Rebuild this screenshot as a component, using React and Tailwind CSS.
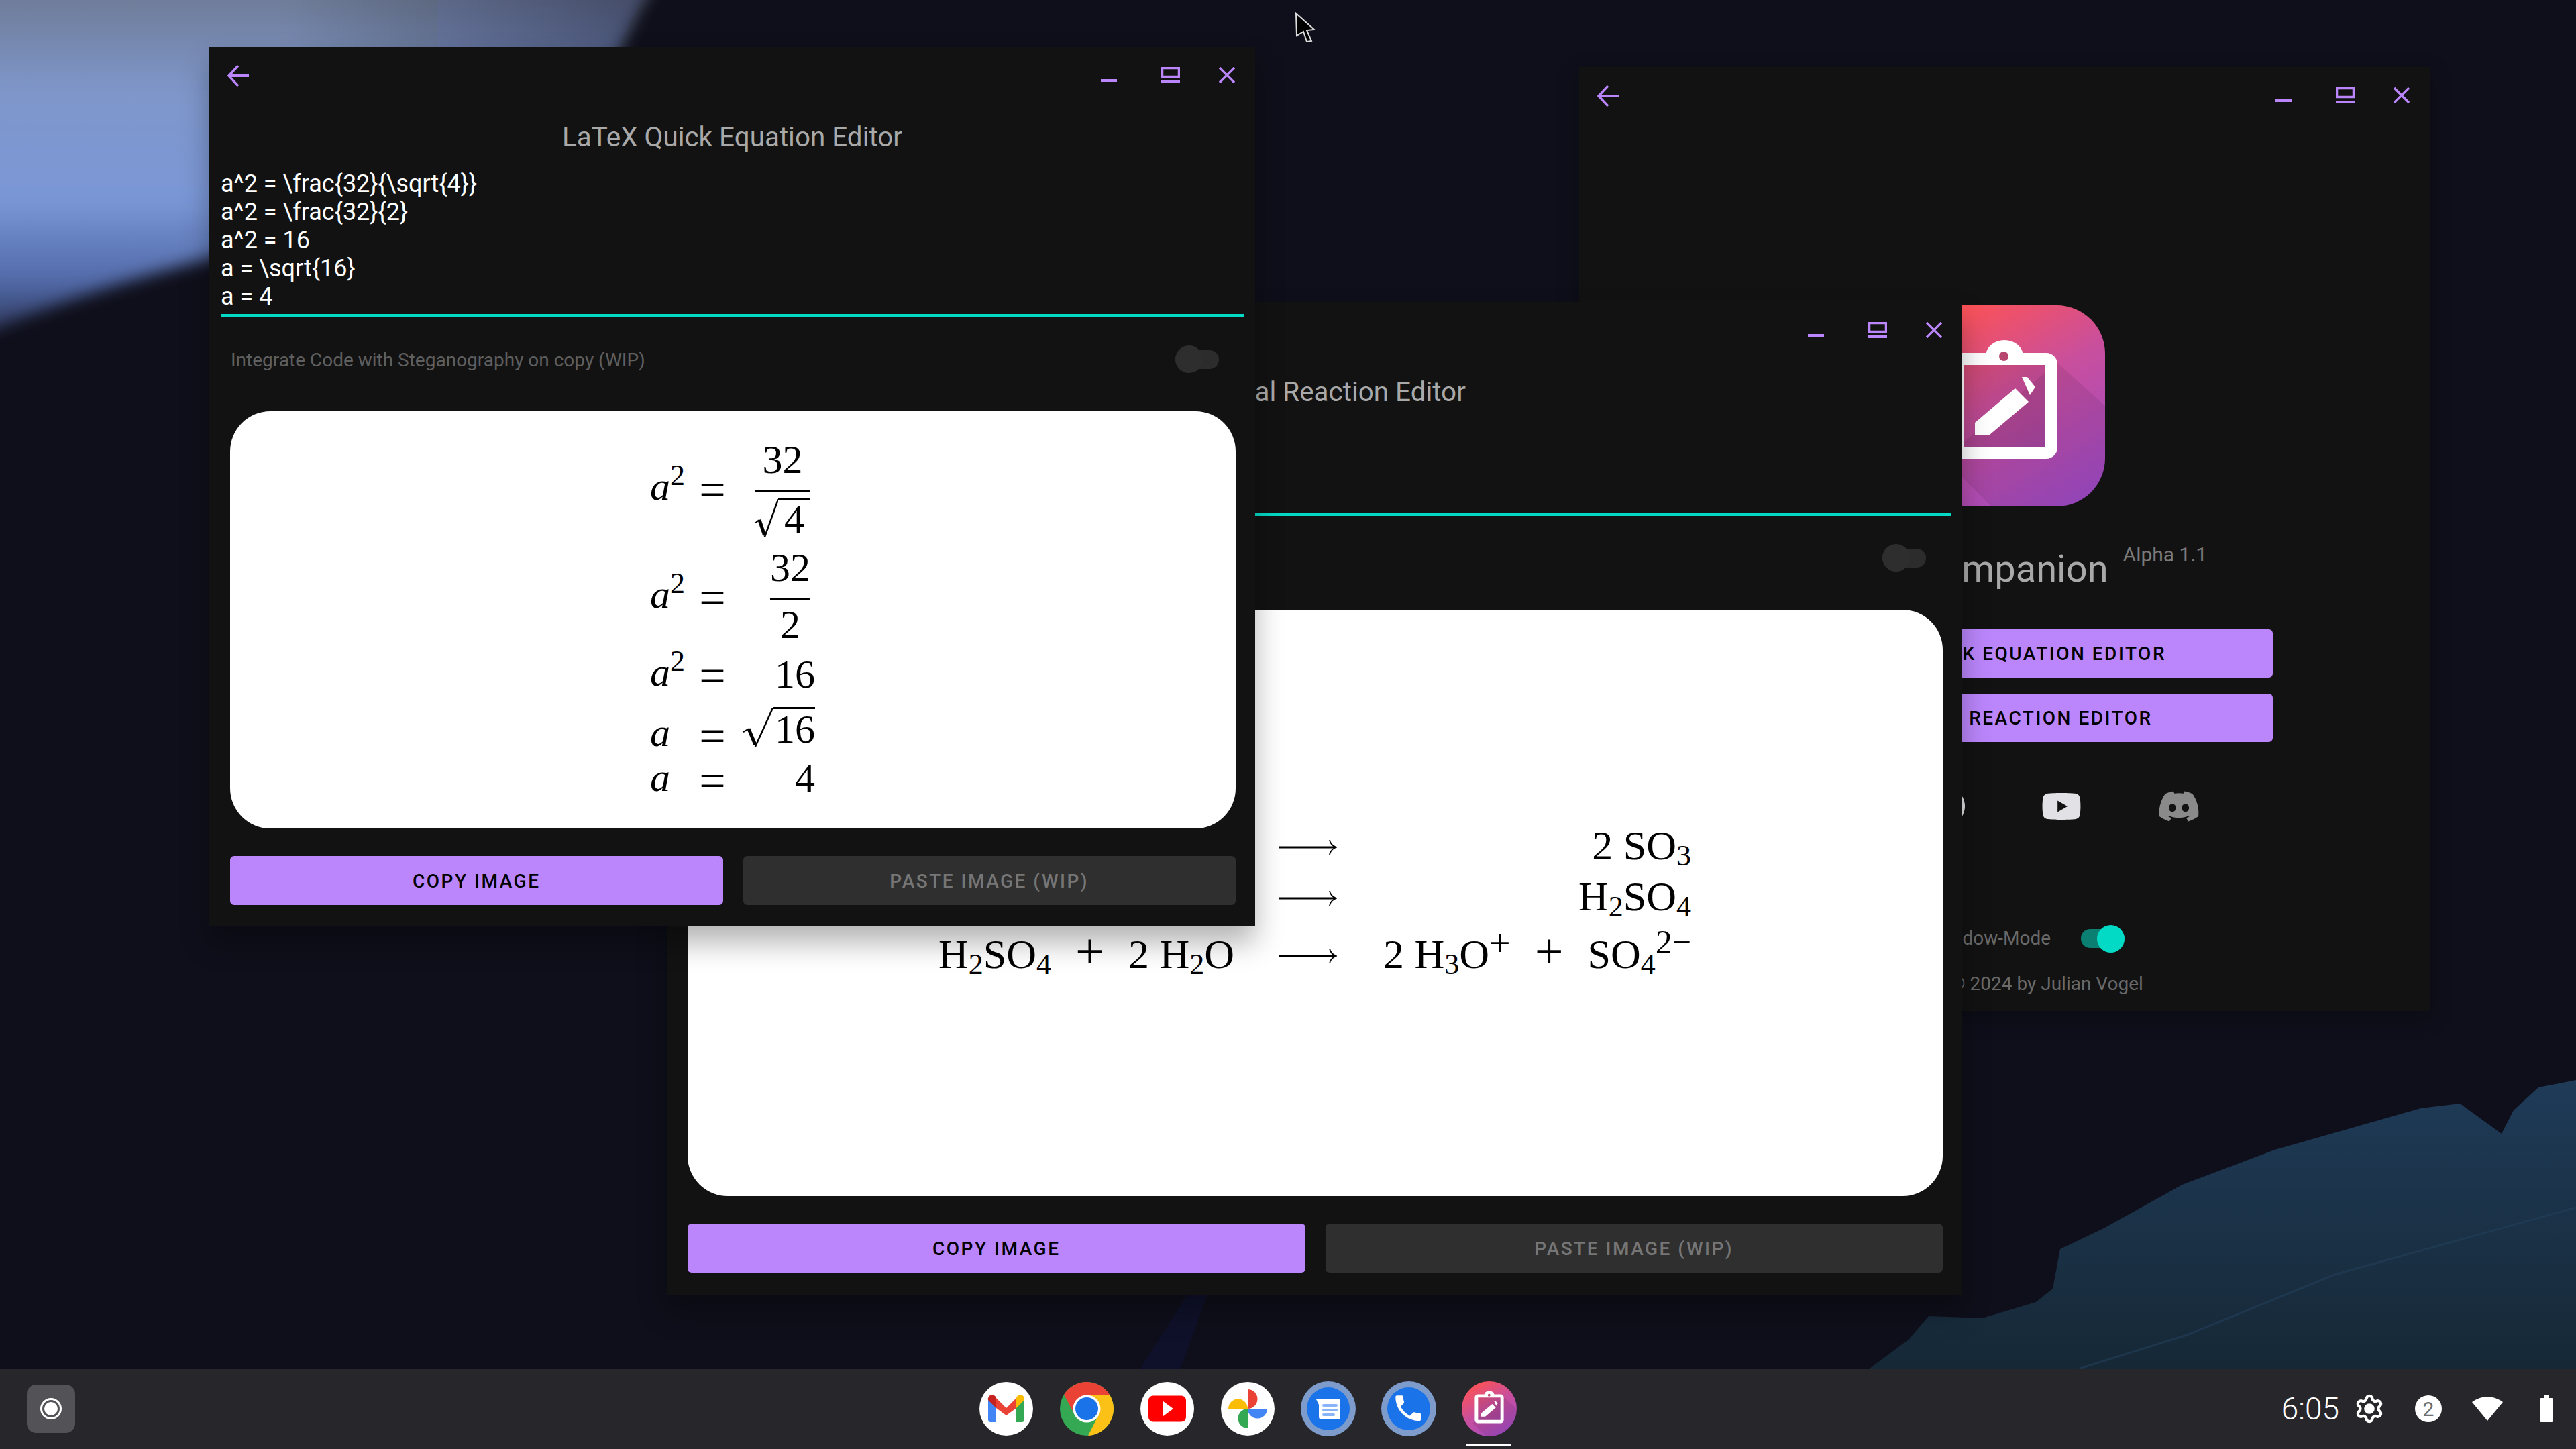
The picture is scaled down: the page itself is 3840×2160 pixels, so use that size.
import React from 'react';
import { FaDiscord, FaGithub, FaGlobe, FaYoutube } from 'react-icons/fa6';
import { Settings } from 'lucide-react';

const roboto = { fontFamily: 'Roboto, sans-serif' };

const BackIcon = () => (
    <svg width="34" height="32" viewBox="0 0 34 32" fill="none" stroke="#bb86fc" strokeWidth="3.5">
        <path d="M33 16H3" strokeWidth="4" />
        <path d="M17 1L3 16l14 15" />
    </svg>
);

const WindowControls = () => (
    <div className="flex items-start gap-[58px] pt-[3px]">
        <svg width="24" height="24" viewBox="0 0 24 24" className="mr-[8px]"><rect x="0" y="18" width="24" height="4" fill="#bb86fc" /></svg>
        <svg width="28" height="24" viewBox="0 0 28 24" fill="none">
            <rect x="1.5" y="1.5" width="25" height="13" stroke="#bb86fc" strokeWidth="3.5" />
            <rect x="0" y="20" width="28" height="4" fill="#bb86fc" />
        </svg>
        <svg width="24" height="24" viewBox="0 0 24 24" fill="none" stroke="#bb86fc" strokeWidth="3.5"><path d="M1 1l22 22M23 1L1 23" /></svg>
    </div>
);

const TitleBar = () => (
    <div className="flex justify-between pt-[27px] pl-[26px] pr-[30px] h-[59px]">
        <BackIcon />
        <WindowControls />
    </div>
);

const Toggle = ({ on }) => (
    <div className="relative flex items-center w-[65px] h-[41px]">
        <div className={`w-full h-[28px] rounded-full ${on ? 'bg-[#0b7f72]' : 'bg-[#2c2c2c]'}`} />
        <div className={`absolute top-0 w-[41px] h-[41px] rounded-full ${on ? 'right-0 bg-[#03dac5]' : 'left-0 bg-[#2e2e2e]'}`} />
    </div>
);

const Sup = ({ children }) => <span className="text-[44px] leading-[0] align-[22px]">{children}</span>;
const Sub = ({ children }) => <span className="text-[44px] leading-[0] align-[-9px]">{children}</span>;
const Plus = () => <span className="text-[76px] leading-[0] mx-[36px]">+</span>;

const Radical = ({ w, h }) => (
    <svg width={w} height={h} viewBox={`0 0 ${w} ${h}`} fill="none" stroke="#000" className="shrink-0">
        <path d={`M1 ${h * 0.62}L${w * 0.2} ${h * 0.54}`} strokeWidth="2" />
        <path d={`M${w * 0.2} ${h * 0.54}L${w * 0.42} ${h - 4}`} strokeWidth="5" />
        <path d={`M${w * 0.42} ${h - 1}L${w} 1.5`} strokeWidth="2.5" />
    </svg>
);

const M = ({ children, className = '' }) => (
    <div className={`h-[60px] leading-[60px] text-[60px] whitespace-nowrap ${className}`}>{children}</div>
);

const Frac = ({ num, den, numPad, denPad }) => (
    <div className="flex flex-col items-center mr-[7px]">
        <div className="flex flex-col justify-end h-[90px]" style={{ paddingBottom: numPad }}>{num}</div>
        <div className="w-full h-[3px] bg-black" />
        <div className="h-[90px]" style={{ paddingTop: denPad }}>{den}</div>
    </div>
);

const EqRow = ({ lhs, rhs, className = '' }) => (
    <div className={`flex items-center h-0 ${className}`}>
        <div className="w-[73px] mb-[12px]">{lhs}</div>
        <M className="w-[40px] text-center text-[70px]">=</M>
        <div className="flex justify-end items-center w-[133px]">{rhs}</div>
    </div>
);

const A2 = () => <M><i>a</i><Sup>2</Sup></M>;
const A = () => <M><i>a</i></M>;

const EquationCard = () => (
    <div className="h-[622px] rounded-[60px] bg-white text-black pt-[118px] pl-[626px]" style={{ fontFamily: '"Liberation Serif", serif' }}>
        <EqRow
            lhs={<A2 />}
            rhs={
                <Frac
                    num={<M className="text-center">32</M>}
                    numPad="15px"
                    denPad="10px"
                    den={
                        <div className="flex">
                            <Radical w={35} h={59} />
                            <div className="border-t-[3px] border-black w-[48px] text-center leading-[56px] text-[60px]">4</div>
                        </div>
                    }
                />
            }
        />
        <EqRow
            className="mt-[161px]"
            lhs={<A2 />}
            rhs={<Frac num={<M>32</M>} numPad="15px" denPad="7px" den={<M className="text-center">2</M>} />}
        />
        <EqRow className="mt-[116px]" lhs={<A2 />} rhs={<M className="mb-[6px]">16</M>} />
        <EqRow
            className="mt-[90px]"
            lhs={<A />}
            rhs={
                <div className="flex mb-[28px]">
                    <Radical w={45} h={60} />
                    <div className="border-t-[3px] border-black w-[63px] pl-[3px] h-[60px] leading-[60px] text-[60px]">16</div>
                </div>
            }
        />
        <EqRow className="mt-[67px]" lhs={<A />} rhs={<M className="mb-[10px]">4</M>} />
    </div>
);

const Arrow = () => (
    <svg width="87" height="24" viewBox="0 0 87 24" fill="none" stroke="#000" className="shrink-0">
        <path d="M0 12H84" strokeWidth="3" />
        <path d="M76 1c1 5 4 9 10 11-6 2-9 6-10 11" strokeWidth="1.8" />
    </svg>
);

const ReactionRow = ({ lhs, rhs, className = '' }) => (
    <div className={`flex items-center h-0 ${className}`}>
        <M className="w-[815px] text-right text-[62px] mb-[6px]">{lhs}</M>
        <div className="ml-[66px]"><Arrow /></div>
        <M className="w-[528px] text-right text-[62px] mb-[6px]">{rhs}</M>
    </div>
);

const ReactionCard = () => (
    <div className="h-[874px] rounded-[60px] bg-white text-black pt-[354px]" style={{ fontFamily: '"Liberation Serif", serif' }}>
        <ReactionRow lhs={<>2 SO<Sub>2</Sub><Plus />O<Sub>2</Sub></>} rhs={<>2 SO<Sub>3</Sub></>} />
        <ReactionRow className="mt-[76px]" lhs={<>SO<Sub>3</Sub><Plus />H<Sub>2</Sub>O</>} rhs={<>H<Sub>2</Sub>SO<Sub>4</Sub></>} />
        <ReactionRow
            className="mt-[86px]"
            lhs={<>H<Sub>2</Sub>SO<Sub>4</Sub><Plus />2 H<Sub>2</Sub>O</>}
            rhs={<>2 H<Sub>3</Sub>O<span className="text-[56px] leading-[0] align-[18px]">+</span><Plus />SO<Sub>4</Sub><span className="text-[50px] leading-[0] align-[22px]">2−</span></>}
        />
    </div>
);

const EditorWindow = ({ className, title, lines, card, label }) => (
    <div className={`absolute bg-[#121212] shadow-[0_24px_40px_rgba(0,0,0,0.3)] ${className}`} style={roboto}>
        <TitleBar />
        <div className="mt-[52px] h-[48px] text-center text-[40.4px] leading-[48px] text-[#a9a9a9]">{title}</div>
        <div className="mt-[24px] pl-[17px] text-[36px] leading-[42px] text-white">
            {lines.map((line) => <div key={line} className="h-[42px]">{line}</div>)}
        </div>
        <div className="mt-[5px] ml-[17px] mr-[16px] h-[5px] bg-[#03dac5]" />
        <div className="flex items-center justify-between h-[41px] mt-[42px] pl-[32px] pr-[54px]">
            <span className="h-[41px] text-[28px] leading-[44px] text-[#5f5f5f]">{label}</span>
            <Toggle />
        </div>
        <div className="mt-[57px] pl-[31px] pr-[29px]">{card}</div>
        <div className="flex gap-[30px] mt-[41px] pl-[31px] pr-[29px]">
            <button className="flex-1 h-[73px] pt-[2px] rounded-[6px] bg-[#bb86fc] text-[28px] font-medium tracking-[2.5px] text-black">COPY IMAGE</button>
            <button className="flex-1 h-[73px] pt-[2px] rounded-[6px] bg-[#2f2f2f] text-[28px] font-medium tracking-[2.5px] text-[#767676]">PASTE IMAGE (WIP)</button>
        </div>
    </div>
);

const AppIcon = ({ className }) => (
    <svg viewBox="0 0 300 300" className={className}>
        <defs>
            <linearGradient id="appGrad" x1="0.25" y1="0" x2="0.85" y2="1">
                <stop offset="0" stopColor="#ff5252" />
                <stop offset="0.45" stopColor="#c94f9c" />
                <stop offset="1" stopColor="#9f4ac8" />
            </linearGradient>
        </defs>
        <rect width="300" height="300" rx="72" fill="url(#appGrad)" />
        <path d="M228 85L300 150V228a72 72 0 0 1-72 72H130L60 229z" fill="#000" opacity="0.08" />
        <rect x="80" y="80" width="140" height="140" rx="8" fill="#000" opacity="0.08" />
        <rect x="80" y="80" width="140" height="140" rx="8" fill="none" stroke="#fff" strokeWidth="18" />
        <path d="M122 76a28 24 0 0 1 56 0z" fill="#fff" />
        <circle cx="149" cy="76" r="7" fill="#b8476f" />
        <path d="M106 175L166 124l20 20-58 49h-22zM176 107h8l12 15-8 12z" fill="#fff" />
    </svg>
);

const MenuButton = ({ children }) => (
    <button className="w-[800px] h-[72px] pt-[2px] rounded-[6px] bg-[#bb86fc] text-[28px] font-medium tracking-[2.5px] text-black">{children}</button>
);

const HomeWindow = () => (
    <div className="absolute left-[2354px] top-[100px] w-[1268px] h-[1407px] bg-[#121212] shadow-[0_10px_30px_rgba(0,0,0,0.25)]" style={roboto}>
        <TitleBar />
        <div className="flex flex-col items-center">
            <AppIcon className="mt-[296px] w-[300px] h-[300px]" />
            <div className="flex items-start mt-[57px] h-[70px] gap-[22px]">
                <span className="text-[56px] leading-[72px] text-[#a9a9a9]">LaTeX Companion</span>
                <span className="text-[30px] leading-[30px] text-[#7a7a7a]">Alpha 1.1</span>
            </div>
            <div className="flex flex-col gap-[24px] mt-[56px]">
                <MenuButton>LATEX QUICK EQUATION EDITOR</MenuButton>
                <MenuButton>CHEMICAL REACTION EDITOR</MenuButton>
            </div>
            <div className="flex items-center justify-center gap-[113px] mt-[72px] h-[48px]">
                <FaGlobe size={60} color="#e2e2e6" />
                <FaGithub size={60} color="#e2e2e6" />
                <FaYoutube size={60} color="#e2e2e6" />
                <FaDiscord size={64} color="#8a8a8a" />
            </div>
            <div className="flex items-center gap-[45px] mt-[152px] ml-[15px]">
                <span className="text-[28px] text-[#6a6a6a]">Use Window-Mode</span>
                <Toggle on />
            </div>
            <div className="mt-[30px] h-[34px] text-[28px] leading-[34px] text-[#6a6a6a]">Copyright © 2024 by Julian Vogel</div>
        </div>
    </div>
);

const Wallpaper = () => (
    <svg className="absolute inset-0" width="3840" height="2040" viewBox="0 0 3840 2040">
        <defs>
            <linearGradient id="sky" x1="0" y1="0" x2="0" y2="1">
                <stop offset="0" stopColor="#6c778f" />
                <stop offset="0.32" stopColor="#7f97cb" />
                <stop offset="0.62" stopColor="#7a97d6" />
                <stop offset="0.85" stopColor="#5169a8" />
                <stop offset="1" stopColor="#2a3150" />
            </linearGradient>
            <linearGradient id="skyFade" x1="0" y1="0" x2="1" y2="0">
                <stop offset="0.45" stopColor="#0f0f1b" stopOpacity="0" />
                <stop offset="1" stopColor="#0f0f1b" stopOpacity="0.4" />
            </linearGradient>
            <linearGradient id="sea" x1="0" y1="0" x2="0" y2="1">
                <stop offset="0" stopColor="#1f3b58" />
                <stop offset="1" stopColor="#162836" />
            </linearGradient>
            <filter id="soft"><feGaussianBlur stdDeviation="12" /></filter>
        </defs>
        <rect width="3840" height="2040" fill="#0f0f1b" />
        <path d="M-30-30H975C945 20 920 70 890 140L600 300 312 385C200 415 80 450-30 500Z" fill="url(#sky)" filter="url(#soft)" />
        <path d="M-30-30H975C945 20 920 70 890 140L600 300 312 385C200 415 80 450-30 500Z" fill="url(#skyFade)" filter="url(#soft)" />
        <path d="M2787 2040L2845 1997 2875 1962 2955 1965 3035 1941 3060 1921 3071 1862 3136 1831 3253 1766 3391 1714 3609 1652 3667 1645 3729 1690 3747 1655 3784 1621 3840 1610V2040Z" fill="url(#sea)" />
        <path d="M3100 2040L3260 1990 3480 1900 3840 1800" fill="none" stroke="#23405a" strokeWidth="3" opacity="0.6" />
        <path d="M1700 2040L1770 1930 1800 1930 1760 2040Z" fill="#0f1330" opacity="0.7" />
    </svg>
);

const Cursor = () => (
    <svg className="absolute left-[1925px] top-[12px]" width="44" height="60" viewBox="25 12 44 60">
        <path d="M32 20L33 53 43 47 48 62 55 61 48 45 59 44Z" fill="#000" stroke="#ddd" strokeWidth="2" />
    </svg>
);

const Circle = ({ children, ring }) => (
    <svg width="82" height="82" viewBox="-1 -1 82 82">
        <circle cx="40" cy="40" r={ring ? 41 : 40} fill={ring ? '#7d9ccb' : '#fff'} />
        {ring && <circle cx="40" cy="40" r="32" fill="#1a73e8" />}
        {children}
    </svg>
);

const Gmail = () => (
    <Circle>
        <path d="M13 27a6 6 0 0 1 9-5l3 2v36H17a4 4 0 0 1-4-4z" fill="#4285f4" />
        <path d="M67 27a6 6 0 0 0-9-5l-3 2v36h8a4 4 0 0 0 4-4z" fill="#34a853" />
        <path d="M25 24L40 39 55 24V39L40 50 25 39z" fill="#ea4335" />
        <path d="M13 27a6 6 0 0 1 12-3V39z" fill="#c5221f" />
        <path d="M67 27a6 6 0 0 0-12-3V39z" fill="#fbbc04" />
    </Circle>
);

const Chrome = () => (
    <svg width="82" height="82" viewBox="-1 -1 82 82">
        <circle cx="40" cy="40" r="40" fill="#34a853" />
        <path d="M40 20H74.64A40 40 0 0 1 42 80L57.3 50Z" fill="#fbc116" />
        <path d="M74.64 20A40 40 0 0 0 6 19L22.7 50 40 20Z" fill="#ea4335" />
        <circle cx="40" cy="40" r="20.5" fill="#fff" />
        <circle cx="40" cy="40" r="17" fill="#1a73e8" />
    </svg>
);

const Youtube = () => (
    <Circle>
        <rect x="12" y="20.5" width="56" height="39" rx="7" fill="#f00" />
        <path d="M34 29L49 40 34 51z" fill="#fff" />
    </Circle>
);

const Photos = () => (
    <Circle>
        <path d="M40 40H11A14.5 14.5 0 0 1 40 40Z" fill="#fbbc04" />
        <path d="M40 40V11A14.5 14.5 0 0 1 40 40Z" fill="#ea4335" />
        <path d="M40 40H69A14.5 14.5 0 0 1 40 40Z" fill="#4285f4" />
        <path d="M40 40V69A14.5 14.5 0 0 1 40 40Z" fill="#34a853" />
    </Circle>
);

const Messages = () => (
    <Circle ring>
        <path d="M22 26H58V52a4 4 0 0 1-4 4H30a4 4 0 0 1-4-4V34z" fill="#fff" />
        <rect x="31" y="33" width="23" height="4" rx="2" fill="#8ab4f8" />
        <rect x="31" y="40" width="23" height="4" rx="2" fill="#8ab4f8" />
        <rect x="31" y="47" width="19" height="4" rx="2" fill="#8ab4f8" />
    </Circle>
);

const PhoneApp = () => (
    <Circle ring>
        <g transform="translate(14 14) scale(2.1)">
            <path d="M6.62 10.79c1.44 2.83 3.76 5.14 6.59 6.59l2.2-2.2c.27-.27.67-.36 1.02-.24 1.12.37 2.33.57 3.57.57.55 0 1 .45 1 1V20c0 .55-.45 1-1 1-9.39 0-17-7.61-17-17 0-.55.45-1 1-1h3.5c.55 0 1 .45 1 1 0 1.25.2 2.45.57 3.57.11.35.03.74-.25 1.02l-2.2 2.2z" fill="#fff" />
        </g>
    </Circle>
);

const Shelf = () => (
    <div className="flex items-center h-[120px] bg-[#26262b]" style={roboto}>
        <div className="flex items-center justify-center ml-[40px] w-[72px] h-[72px] rounded-[14px] bg-[#535357]">
            <div className="flex items-center justify-center w-[32px] h-[32px] rounded-full border-[3px] border-white">
                <div className="w-[20px] h-[20px] rounded-full bg-white" />
            </div>
        </div>
        <div className="flex items-center ml-[1347px] gap-[38px]">
            <Gmail />
            <Chrome />
            <Youtube />
            <Photos />
            <Messages />
            <PhoneApp />
            <div className="relative">
                <AppIcon className="w-[82px] h-[82px] rounded-full" />
                <div className="absolute left-[7px] top-[93px] w-[67px] h-[4px] bg-white" />
            </div>
        </div>
        <div className="flex items-center ml-auto pr-[34px] text-white">
            <span className="text-[46px] font-light leading-none">6:05</span>
            <div className="relative flex items-center justify-center ml-[22px]">
                <Settings size={46} strokeWidth={2.2} />
                <div className="absolute w-[14px] h-[14px] rounded-full bg-white" />
            </div>
            <div className="flex items-center justify-center ml-[45px] w-[40px] h-[40px] rounded-full bg-white text-[30px] text-[#6f6f6f]">2</div>
            <svg width="46" height="36" viewBox="0 0 46 36" className="ml-[45px]"><path d="M0 8Q23-8 46 8L23 36Z" fill="#fff" /></svg>
            <svg width="20" height="40" viewBox="0 0 20 40" className="ml-[55px]"><path d="M6 0h8v4h4a2 2 0 0 1 2 2v32a2 2 0 0 1-2 2H2a2 2 0 0 1-2-2V6a2 2 0 0 1 2-2h4z" fill="#fff" /></svg>
        </div>
    </div>
);

export default function App() {
    return (
        <div className="flex flex-col w-[3840px] h-[2160px] overflow-hidden bg-[#0f0f1b]">
            <div className="relative flex-1">
                <Wallpaper />
                <HomeWindow />
                <EditorWindow
                    className="left-[994px] top-[450px] w-[1931px] h-[1480px]"
                    title="Chemical Reaction Editor"
                    label="Integrate Code with Steganography on copy (WIP)"
                    lines={['2 SO_2 + O_2 -> 2 SO_3', 'SO_3 + H_2O -> H_2SO_4', 'H_2SO_4 + 2 H_2O -> 2 H_3O^+ + SO_4^{2-}']}
                    card={<ReactionCard />}
                />
                <EditorWindow
                    className="left-[312px] top-[70px] w-[1559px] h-[1311px]"
                    title="LaTeX Quick Equation Editor"
                    label="Integrate Code with Steganography on copy (WIP)"
                    lines={['a^2 = \\frac{32}{\\sqrt{4}}', 'a^2 = \\frac{32}{2}', 'a^2 = 16', 'a = \\sqrt{16}', 'a = 4']}
                    card={<EquationCard />}
                />
                <Cursor />
            </div>
            <Shelf />
        </div>
    );
}
